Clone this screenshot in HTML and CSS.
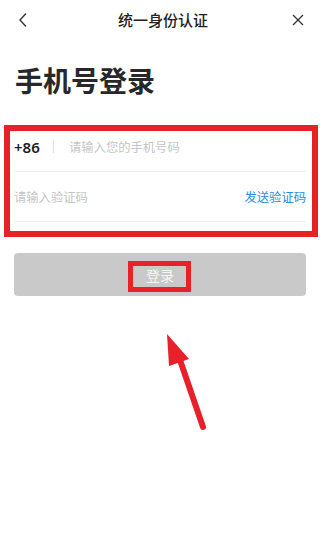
FILE: index.html
```html
<!DOCTYPE html>
<html lang="zh-CN">
<head>
<meta charset="utf-8">
<title>统一身份认证</title>
<link rel="stylesheet" href="styles.css">
</head>
<body>
<div class="page">
  <header class="topbar">
    <span class="icon back">
      <svg width="10" height="16" viewBox="0 0 10 16"><path d="M8 1.5 L2 8 L8 14.5" fill="none" stroke="#333" stroke-width="1.4"/></svg>
    </span>
    <span class="title">统一身份认证</span>
    <span class="icon close">
      <svg width="12" height="12" viewBox="0 0 12 12"><path d="M1 1 L11 11 M11 1 L1 11" fill="none" stroke="#333" stroke-width="1.3"/></svg>
    </span>
  </header>
  <h1 class="heading">手机号登录</h1>
  <div class="form">
    <div class="row">
      <span class="code">+86</span>
      <span class="sep"></span>
      <span class="ph">请输入您的手机号码</span>
    </div>
    <div class="row">
      <span class="ph">请输入验证码</span>
      <span class="send">发送验证码</span>
    </div>
  </div>
  <div class="btn">登录</div>

  <div class="mark mark-form"></div>
  <div class="mark mark-btn"></div>
  <svg class="arrow" width="320" height="551" viewBox="0 0 320 551">
    <line x1="180" y1="360" x2="203" y2="427" stroke="#e8202a" stroke-width="6" stroke-linecap="round"/>
    <polygon points="167,334 169,366 189,359" fill="#e8202a"/>
  </svg>
</div>
</body>
</html>
```
FILE: styles.css
```css
* { box-sizing: border-box; }
html, body { margin: 0; padding: 0; background: #fff; }
body {
  font-family: "Noto Sans CJK SC", "Noto Sans", sans-serif;
  color: #222;
}
.page {
  position: relative;
  width: 320px;
  height: 551px;
  overflow: hidden;
}
.topbar {
  height: 40px;
  display: flex;
  align-items: center;
  justify-content: space-between;
  padding: 0 16px 0 18px;
}
.icon { display: flex; align-items: center; width: 14px; }
.close { justify-content: flex-end; }
.title {
  font-size: 15px;
  font-weight: 500;
  color: #222;
  line-height: 20px;
  margin-left: 4px;
}
.heading {
  margin: 22px 0 0 15px;
  font-size: 28px;
  line-height: 36px;
  font-weight: 700;
  color: #282828;
  letter-spacing: 0;
}
.form {
  margin-top: 24px;
  padding: 0 14px;
}
.row {
  height: 50px;
  display: flex;
  align-items: center;
  border-bottom: 1px solid #f0f0f0;
}
.code {
  font-size: 15px;
  font-weight: 600;
  color: #222;
  width: 39px;
  font-family: "Noto Sans", "Noto Sans CJK SC", sans-serif;
}
.sep {
  width: 1px;
  height: 13px;
  background: #ddd;
  margin-right: 15px;
}
.ph {
  flex: 1;
  font-size: 12.3px;
  color: #c6c6c6;
}
.send {
  font-size: 12.3px;
  color: #2a8ce6;
}
.btn {
  margin: 31px 14px 0;
  height: 43px;
  border-radius: 4px;
  background: #c9c9c9;
  color: #f6f6f6;
  font-size: 14px;
  display: flex;
  align-items: center;
  justify-content: center;
}
.mark {
  position: absolute;
  border: 6px solid #e8202a;
}
.mark-form {
  left: 4px;
  top: 125px;
  width: 314px;
  height: 112px;
}
.mark-btn {
  left: 128px;
  top: 261px;
  width: 63px;
  height: 31px;
  border-width: 5px;
}
.arrow {
  position: absolute;
  left: 0;
  top: 0;
}
```
